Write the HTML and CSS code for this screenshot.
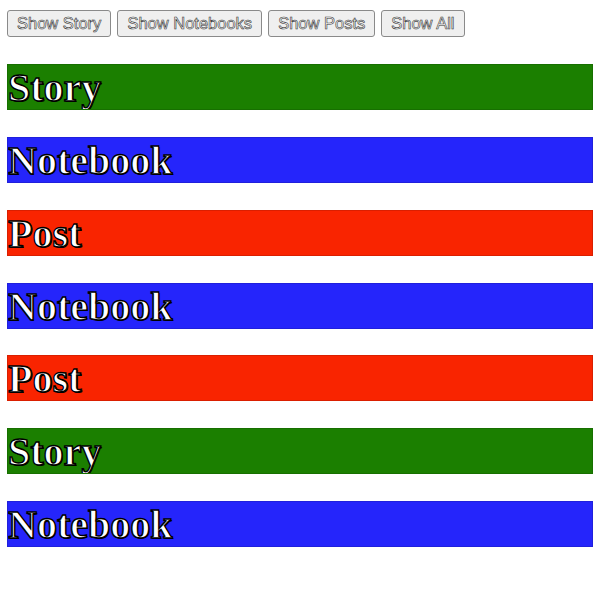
FILE: index.html
```html
<!DOCTYPE html>
<html>
<head>
<meta charset="utf-8">
<link rel="stylesheet" href="styles.css">
</head>
<body>
<div class="controls">
  <button class="btn">Show Story</button>
  <button class="btn">Show Notebooks</button>
  <button class="btn">Show Posts</button>
  <button class="btn">Show All</button>
</div>
<div class="list">
  <h1 class="item story">Story</h1>
  <h1 class="item notebook">Notebook</h1>
  <h1 class="item post">Post</h1>
  <h1 class="item notebook">Notebook</h1>
  <h1 class="item post">Post</h1>
  <h1 class="item story">Story</h1>
  <h1 class="item notebook">Notebook</h1>
</div>
</body>
</html>
```

FILE: styles.css
```css
html, body {
  background: #ffffff;
}
body {
  margin: 10px 7px 0;
  font-family: "Liberation Serif", "Times New Roman", serif;
}
.controls {
  display: flex;
  gap: 6px;
  height: 27px;
}
.btn {
  height: 27px;
  margin: 0;
  padding: 0 9px;
  font-family: "Liberation Sans", Arial, sans-serif;
  font-size: 16.5px;
  color: #ffffff;
  -webkit-text-stroke: 0.6px #333;
  background: #efefef;
  border: 1px solid #8a8a8a;
  border-radius: 3px;
}
.list {
  display: flow-root;
}
.item {
  box-sizing: border-box;
  margin: 26.9px 0;
  height: 46px;
  font-size: 40px;
  line-height: 46px;
  font-weight: bold;
  color: #ffffff;
  -webkit-text-stroke: 1.4px #000;
  text-shadow: 1px 1px 0 #000;
  border: 1px solid rgba(0, 0, 0, 0.12);
  white-space: nowrap;
  overflow: hidden;
}
.item.story {
  background: #1b7f00;
}
.item.notebook {
  background: #2525fb;
}
.item.post {
  background: #f92400;
}
```
